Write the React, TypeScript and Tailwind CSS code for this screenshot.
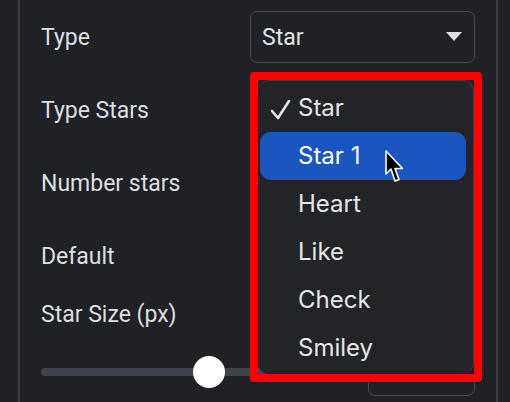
import React from 'react';

const labels = [
  { text: 'Type', h: 'h-[73px]' },
  { text: 'Type Stars', h: 'h-[73px]' },
  { text: 'Number stars', h: 'h-[73px]' },
  { text: 'Default', h: 'h-[72px]' },
  { text: 'Star Size (px)', h: 'h-[44px]' },
];

const items = ['Star', 'Star 1', 'Heart', 'Like', 'Check', 'Smiley'];

const Cursor = () => (
  <svg width="22" height="36" viewBox="-2 -2 22 36" className="absolute left-[384px] top-[149px]">
    <path
      d="M0 0 L0 23 L5 18 L9 30 L13 28.5 L9 17.5 L16.5 17.5 Z"
      fill="#000"
      stroke="#fff"
      strokeWidth="1.6"
      strokeLinejoin="round"
    />
  </svg>
);

const App: React.FC = () => {
  return (
    <div className="relative w-[510px] h-[402px] overflow-hidden bg-[#1f2124] text-[#dddee1] font-['Roboto',sans-serif]">
      <div className="flex h-full">
        <div className="w-[18px]" />
        <div className="w-[2px] bg-[#3a3d43]" />
        <div className="flex-1 flex flex-col pl-[21px] pr-[21px]">
          {labels.map((l, i) => (
            <div key={l.text} className={`flex items-center justify-between ${l.h}`}>
              <span className="text-[23px] pt-[4px]">{l.text}</span>
              {i === 0 && (
                <div className="w-[225px] h-[52px] border-[1.5px] border-[#45484e] rounded-[7px] flex items-center justify-between pl-[11px] pr-[12px]">
                  <span className="text-[23px] pt-[3px] text-[#e2e3e6]">Star</span>
                  <svg width="16" height="9" viewBox="0 0 16 9">
                    <polygon points="0,0 16,0 8,9" fill="#dcdde0" />
                  </svg>
                </div>
              )}
            </div>
          ))}
          <div className="mt-[13px] h-[48px] flex items-center justify-between">
            <div className="relative w-[315px] h-[8px] rounded-full bg-[#40434a]">
              <div className="absolute left-[152px] top-[-12px] w-[32px] h-[32px] rounded-full bg-white" />
            </div>
            <div className="w-[107px] h-[48px] border-[1.5px] border-[#45484e] rounded-[7px]" />
          </div>
        </div>
        <div className="w-[2px] bg-[#3a3d43]" />
        <div className="w-[12px]" />
      </div>

      <div className="absolute left-[250px] top-[72px] w-[232px] h-[310px] border-[8px] border-[#ff0000] rounded-[4px] overflow-hidden">
        <div className="h-full rounded-[12px] bg-[#222427] border-t border-r border-[#3a3c40] pt-[3px] font-['Inter',sans-serif]">
          {items.map((it, i) => (
            <div
              key={it}
              className={`relative h-[48px] ml-[2px] mr-[7px] rounded-[11px] flex items-center pl-[38px] text-[24px] ${
                i === 1 ? 'bg-[#1b56c0] text-white' : 'text-[#e6e6e7]'
              }`}
            >
              {i === 0 && (
                <svg width="20" height="20" viewBox="0 0 20 20" className="absolute left-[11px] top-[16px]">
                  <polyline points="1,11 7,18 18,1" fill="none" stroke="#e6e6e7" strokeWidth="2.6" strokeLinecap="round" strokeLinejoin="round" />
                </svg>
              )}
              {it}
            </div>
          ))}
        </div>
      </div>

      <Cursor />
    </div>
  );
};

export default App;
